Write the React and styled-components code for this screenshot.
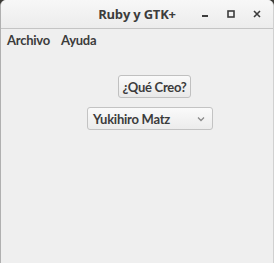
import styled, { createGlobalStyle } from "styled-components";

const Global = createGlobalStyle`
  html, body {
    margin: 0;
    padding: 0;
    background: #3c3b37;
  }
  body {
    font-family: "Open Sans", "DejaVu Sans", sans-serif;
  }
`;

const Window = styled.div`
  width: 274px;
  height: 263px;
  box-sizing: border-box;
  background: #efefef;
  border-left: 1px solid #b0b0b0;
  border-right: 1px solid #d0d0d0;
  border-radius: 6px 6px 0 0;
  display: flex;
  flex-direction: column;
  overflow: hidden;
`;

const TitleBar = styled.div`
  height: 28px;
  position: relative;
  display: flex;
  align-items: center;
  justify-content: center;
  background: linear-gradient(#f7f7f7, #ececec);
  border-bottom: 1px solid #c4c4c4;
`;

const Title = styled.div`
  font-size: 13px;
  font-weight: bold;
  color: #3c3c3c;
  letter-spacing: -0.2px;
`;

const Controls = styled.div`
  position: absolute;
  right: 11px;
  top: 0;
  height: 100%;
  display: flex;
  align-items: center;
  gap: 16px;
`;

const Ctl = styled.svg`
  width: 10px;
  height: 10px;
  display: block;
`;

const label = `
  font-family: "Lato", "Open Sans", sans-serif;
  font-size: 13px;
  font-weight: bold;
  letter-spacing: -0.25px;
  white-space: nowrap;
  color: #3c3c3c;
`;

const MenuBar = styled.div`
  display: flex;
  gap: 11px;
  padding: 0 6px;
  height: 22px;
  align-items: center;
`;

const MenuItem = styled.span`
  ${label}
`;

const Body = styled.div`
  display: flex;
  flex-direction: column;
  align-items: flex-start;
  padding-top: 24px;
  gap: 9px;
`;

const Button = styled.button`
  ${label}
  margin-left: 117px;
  width: 73px;
  height: 23px;
  padding: 0;
  background: linear-gradient(#fafafa, #e9e9e9);
  border: 1px solid #c0c0c0;
  border-radius: 3px;
`;

const Combo = styled.div`
  ${label}
  margin-left: 86px;
  width: 126px;
  height: 23px;
  box-sizing: border-box;
  display: flex;
  align-items: center;
  justify-content: space-between;
  padding: 0 7px 0 5px;
  background: linear-gradient(#fafafa, #ececec);
  border: 1px solid #c3c3c3;
  border-radius: 3px;
`;

export default function App() {
  return (
    <>
      <Global />
      <Window>
        <TitleBar>
          <Title>Ruby y GTK+</Title>
          <Controls>
            <Ctl viewBox="0 0 10 10">
              <rect x="2" y="6" width="6" height="2" fill="#3c3c3c" />
            </Ctl>
            <Ctl viewBox="0 0 10 10">
              <rect x="2" y="2" width="6" height="6" fill="none" stroke="#3c3c3c" strokeWidth="1.6" />
            </Ctl>
            <Ctl viewBox="0 0 10 10">
              <path d="M2 2 L8 8 M8 2 L2 8" stroke="#3c3c3c" strokeWidth="1.6" />
            </Ctl>
          </Controls>
        </TitleBar>
        <MenuBar>
          <MenuItem>Archivo</MenuItem>
          <MenuItem>Ayuda</MenuItem>
        </MenuBar>
        <Body>
          <Button>¿Qué Creo?</Button>
          <Combo>
            <span>Yukihiro Matz</span>
            <svg width="8" height="6" viewBox="0 0 8 6">
              <path d="M1 1.5 L4 4.5 L7 1.5" fill="none" stroke="#8a8a8a" strokeWidth="1.3" />
            </svg>
          </Combo>
        </Body>
      </Window>
    </>
  );
}
